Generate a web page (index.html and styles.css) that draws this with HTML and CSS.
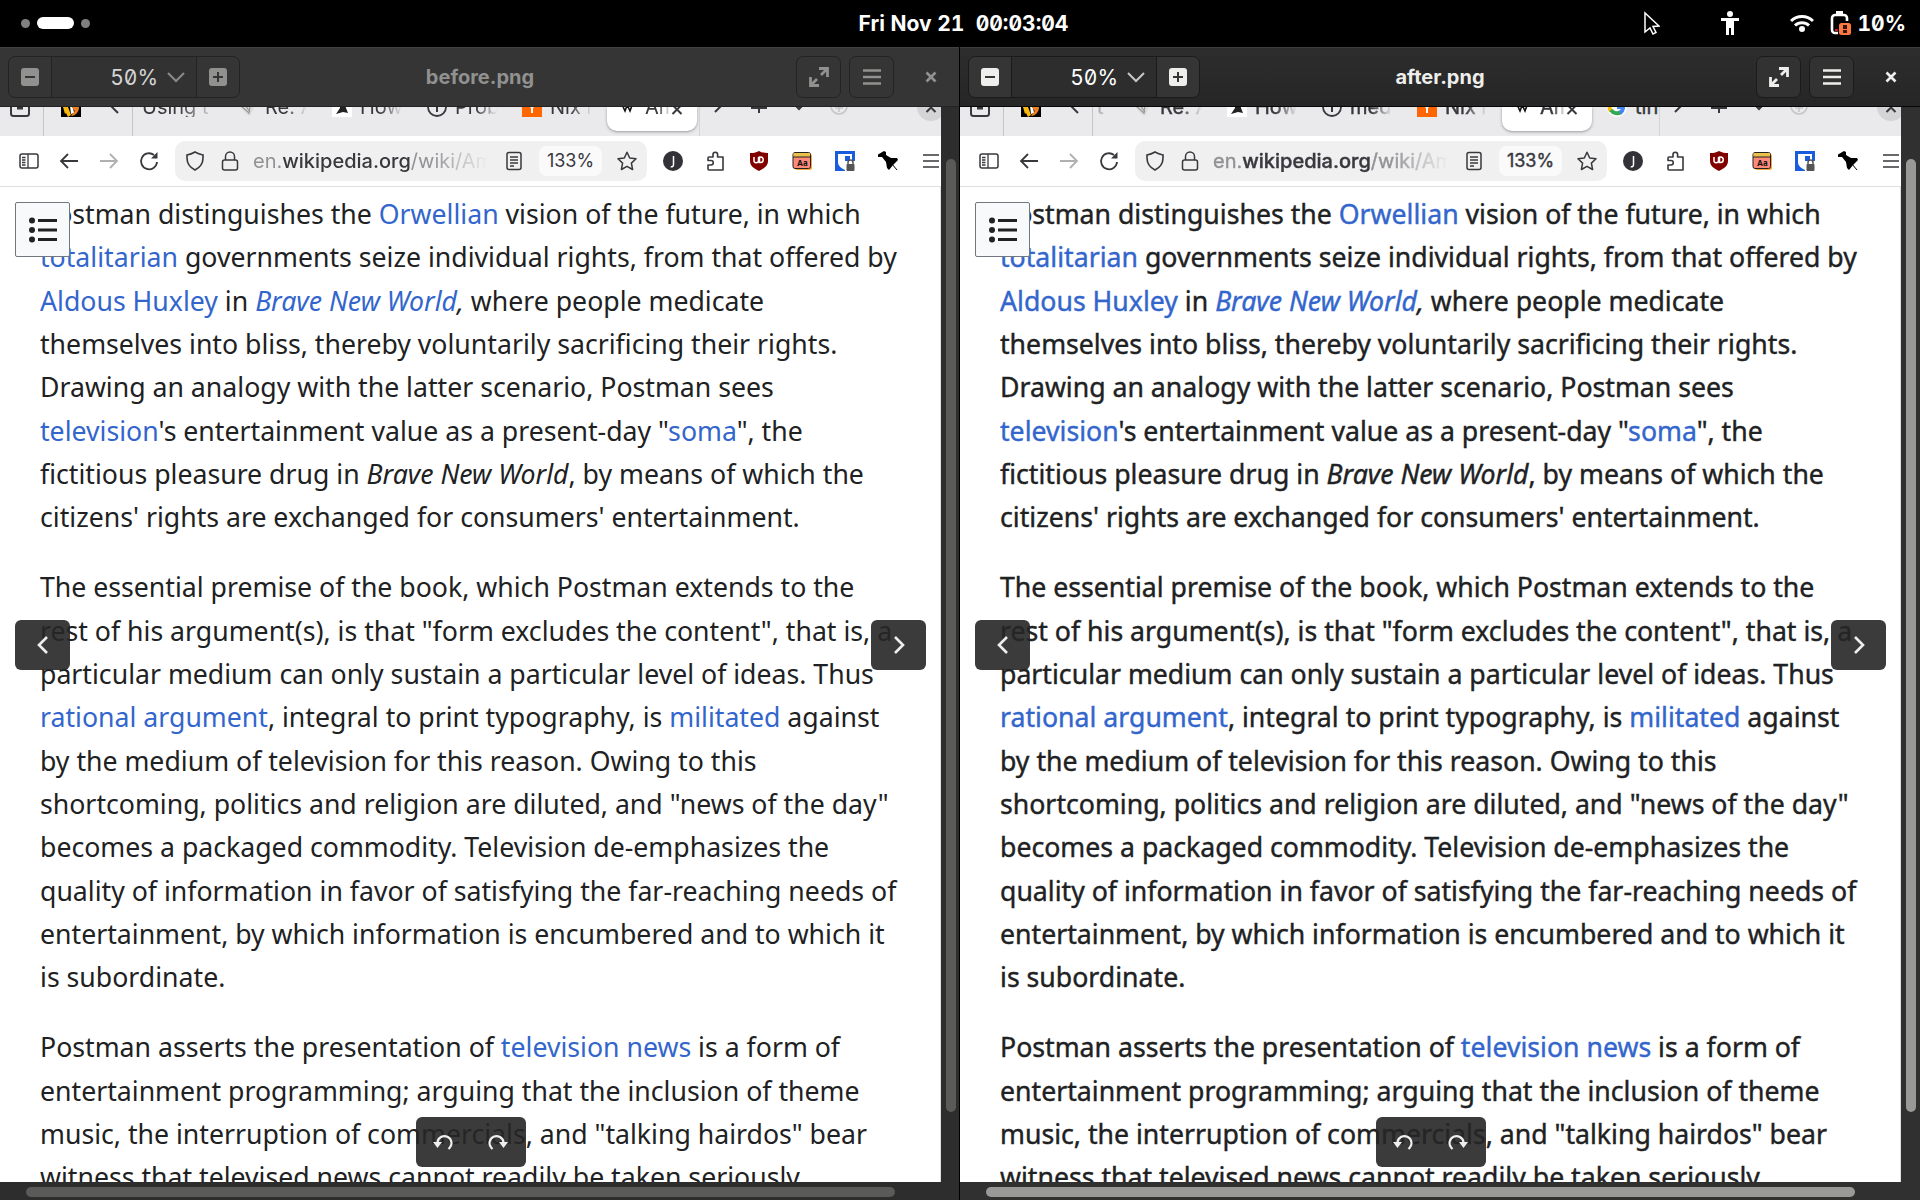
FILE: index.html
```html
<!DOCTYPE html>
<html lang="en">
<head>
<meta charset="utf-8">
<meta name="viewport" content="width=device-width, initial-scale=1">
<title>Image Viewer</title>
<link rel="stylesheet" href="styles.css">
</head>
<body>
<svg class="sprite" aria-hidden="true">
  <symbol id="zoom-out" viewBox="0 0 18 18"><path fill="currentColor" fill-rule="evenodd" d="M3 0h12a3 3 0 0 1 3 3v12a3 3 0 0 1-3 3H3a3 3 0 0 1-3-3V3a3 3 0 0 1 3-3zM4 8v2h10V8z"/></symbol>
  <symbol id="zoom-in" viewBox="0 0 18 18"><path fill="currentColor" fill-rule="evenodd" d="M3 0h12a3 3 0 0 1 3 3v12a3 3 0 0 1-3 3H3a3 3 0 0 1-3-3V3a3 3 0 0 1 3-3zM8 4v4H4v2h4v4h2v-4h4V8h-4V4z"/></symbol>
  <symbol id="chev-down" viewBox="0 0 18 18"><path d="M1 5l8 8 8-8" fill="none" stroke="currentColor" stroke-width="2"/></symbol>
  <symbol id="expand" viewBox="0 0 20 20"><path d="M10 1.500h8.500V10M18.500 1.500L12 8M10 18.500H1.500V10M1.500 18.500L8 12" fill="none" stroke="currentColor" stroke-width="2.800"/></symbol>
  <symbol id="menu" viewBox="0 0 18 18"><path d="M0 2.500h18M0 9h18M0 15.500h18" stroke="currentColor" stroke-width="2.400"/></symbol>
  <symbol id="close" viewBox="0 0 12 12"><path d="M1.500 1.500l9 9M10.500 1.500l-9 9" stroke="currentColor" stroke-width="2.600"/></symbol>
  <symbol id="box" viewBox="0 0 20 20"><rect x="1" y="1" width="18" height="18" rx="2.500" fill="none" stroke="currentColor" stroke-width="2"/><path d="M7 11h6" stroke="currentColor" stroke-width="3"/></symbol>
  <symbol id="hound" viewBox="0 0 20 20"><path fill="#000" d="M0 0h20v20H0z"/><path fill="#f7b90f" d="M2 10l5 0 3 8-3 2-2-4-1 1z"/><path fill="#fff" d="M9 9l3 1 1 6-3 1z"/><path fill="#f08020" d="M11 7l7 3c0 5-3 8-7 9l-1-1c4-2 5-5 1-7z"/></symbol>
  <symbol id="scroll-left" viewBox="0 0 20 20"><path d="M14 0L6 8l8 8" fill="none" stroke="currentColor" stroke-width="2"/></symbol>
  <symbol id="scroll-right" viewBox="0 0 20 20"><path d="M6 -1l8 8-8 8" fill="none" stroke="currentColor" stroke-width="2"/></symbol>
  <symbol id="shell" viewBox="0 0 20 20"><path fill="#ddd" d="M2 8l12-3 3 6-4 8-3-1z"/><path d="M4 9l8 7M8 8l5 7M13 8l-1 9" stroke="#999" stroke-width="1.200"/></symbol>
  <symbol id="arch" viewBox="0 0 20 20"><path fill="#fff" d="M0 0h20v20H0z"/><path fill="#222" d="M8 2h4l2 9 2 5-5-1-7 2 4-6z"/></symbol>
  <symbol id="info" viewBox="0 0 20 20"><circle cx="10" cy="10" r="9" fill="none" stroke="currentColor" stroke-width="1.800"/><path d="M10 6v9" stroke="currentColor" stroke-width="2"/></symbol>
  <symbol id="orange" viewBox="0 0 20 20"><path fill="#f60" d="M0 0h20v20H0z"/><path d="M5 4l5 7 5-7M10 11v5" fill="none" stroke="#fff" stroke-width="2"/></symbol>
  <symbol id="wiki" viewBox="0 0 20 20"><path d="M3 3l5 11 3-8M8 3l5 11 4-11" fill="none" stroke="#111" stroke-width="1.600"/></symbol>
  <symbol id="goog" viewBox="0 0 20 20"><circle cx="10" cy="10" r="10" fill="#fff"/><g fill="none" stroke-width="4"><path d="M4 6a7 7 0 0 1 11-1" stroke="#ea4335"/><path d="M4 6a7 7 0 0 0 0 8" stroke="#fbbc05"/><path d="M4 13a7 7 0 0 0 10 2" stroke="#34a853"/><path d="M10 10h6a7 7 0 0 1-3 6" stroke="#4285f4"/></g></symbol>
  <symbol id="plus" viewBox="0 0 20 20"><path d="M2 11h16M10 2v14" stroke="currentColor" stroke-width="2"/></symbol>
  <symbol id="plus-circle" viewBox="0 0 20 20"><circle cx="10" cy="9" r="8" fill="none" stroke="currentColor" stroke-width="1.600"/><path d="M6 11h8M10 7v8" stroke="currentColor" stroke-width="1.600"/></symbol>
  <symbol id="drop" viewBox="0 0 20 20"><path d="M4 6l6 6 6-6" fill="none" stroke="currentColor" stroke-width="2"/></symbol>
  <symbol id="tab-x" viewBox="0 0 12 12"><path d="M1.500 0l9 9M10.500 0l-9 9" stroke="currentColor" stroke-width="2"/></symbol>
  <symbol id="sidebar" viewBox="0 0 20 20"><rect x="1" y="3" width="18" height="14" rx="2" fill="none" stroke="currentColor" stroke-width="1.500"/><path d="M9 3v14M3 6.500h3.500M3 9h3.500M3 11.500h3.500M3 14h3.500" stroke="currentColor" stroke-width="1.300"/></symbol>
  <symbol id="back" viewBox="0 0 20 20"><path d="M19 10H2M9 3l-7 7 7 7" fill="none" stroke="currentColor" stroke-width="1.800"/></symbol>
  <symbol id="fwd" viewBox="0 0 20 20"><path d="M1 10h17M11 3l7 7-7 7" fill="none" stroke="currentColor" stroke-width="1.800"/></symbol>
  <symbol id="reload" viewBox="0 0 20 20"><path d="M18 11a8 8 0 1 1-3-7" fill="none" stroke="currentColor" stroke-width="1.800"/><path d="M18.500 1v6.500H12z" fill="currentColor"/></symbol>
  <symbol id="shield" viewBox="0 0 20 20"><path d="M10 1c3 1.800 5.500 2.500 8 3v3c0 6-3 9.500-8 12-5-2.500-8-6-8-12V4c3-.5 5-1.200 8-3z" fill="none" stroke="currentColor" stroke-width="1.600"/></symbol>
  <symbol id="lock" viewBox="0 0 20 20"><rect x="2.500" y="9" width="15" height="10" rx="2" fill="none" stroke="currentColor" stroke-width="1.500"/><path d="M5.500 9V5.500a4.500 4.500 0 0 1 9 0V9" fill="none" stroke="currentColor" stroke-width="1.500"/></symbol>
  <symbol id="reader" viewBox="0 0 20 20"><rect x="3" y="1.500" width="14" height="17" rx="2" fill="none" stroke="currentColor" stroke-width="1.500"/><path d="M6 6h8M6 9h8M6 12h8M6 15h4" stroke="currentColor" stroke-width="1.400"/></symbol>
  <symbol id="star" viewBox="0 0 20 20"><path d="M10 1.200l2.700 5.800 6.300.8-4.600 4.300 1.200 6.400L10 15.300l-5.600 3.200 1.200-6.400L1 7.800 7.300 7z" fill="none" stroke="currentColor" stroke-width="1.500" stroke-linejoin="round"/></symbol>
  <symbol id="jay" viewBox="0 0 20 20"><circle cx="10" cy="10" r="10" fill="#323238"/><path d="M10.500 5v8.500c0 1.600-1 2.500-2.800 2.200" fill="none" stroke="#fff" stroke-width="1.500"/></symbol>
  <symbol id="puzzle" viewBox="0 0 20 20"><path d="M3 6h4V3.500a2.300 2.300 0 0 1 4.600 0V6H17v13H3a1 1 0 0 1-1-1v-4h3a2 2 0 0 0 0-4.500H2V7a1 1 0 0 1 1-1z" fill="none" stroke="currentColor" stroke-width="1.600" stroke-linejoin="round"/></symbol>
  <symbol id="ublock" viewBox="0 0 20 20"><path fill="#800000" d="M10 0c3 1.800 6 2 9 2v8c0 5-4 7.500-9 10-5-2.500-9-5-9-10V2c3 0 6-.2 9-2z"/><path d="M5 6v3.500a2 2 0 0 0 4.500 0V6M10.500 6v5.500h1a2.700 2.700 0 0 0 0-5.500z" fill="none" stroke="#fff" stroke-width="1.500"/></symbol>
  <symbol id="fontbox" viewBox="0 0 20 20"><rect x="3" y="3" width="17" height="16" rx="2" fill="#f4a53c"/><rect x="1" y="1.500" width="17.500" height="16" rx="2" fill="#ff8a7a" stroke="#222"/><path fill="#e9c04a" d="M1.500 2h16.500v4H1.500z"/><path d="M1 6h17.500" stroke="#222"/><text x="5" y="15" font-family="Inter, sans-serif" font-size="8" font-weight="700" fill="#111">Aa</text></symbol>
  <symbol id="vault" viewBox="0 0 20 20"><path fill="#175ddc" d="M0 0h20v20H0z"/><path fill="#fff" d="M3 3h14v8c0 4-3 6-7 8-4-2-7-4-7-8z"/><path fill="#175ddc" d="M10 5h5v6c0 2-2 3-5 5z"/><path fill="#fff" d="M10 10h10v10H10z"/><rect x="11.500" y="13" width="8" height="7" rx="1" fill="#555"/><path d="M13 13v-1.500a2.500 2.500 0 0 1 5 0V13" fill="none" stroke="#555" stroke-width="1.500"/></symbol>
  <symbol id="pin" viewBox="0 0 20 20"><path fill="#000" d="M6 0l2 1v3l5 3 6 0 1 2-5 5-4 5-2-2-1-6-4-5-4 0-1-2z"/><path d="M14 13l5 6" stroke="#000" stroke-width="1"/></symbol>
  <symbol id="burger" viewBox="0 0 20 20"><path d="M2 4h16M2 10h16M2 16h16" stroke="currentColor" stroke-width="1.600"/></symbol>
  <symbol id="toc" viewBox="0 0 28 26"><g fill="currentColor"><circle cx="3" cy="3.500" r="3"/><circle cx="3" cy="13" r="3"/><circle cx="3" cy="22.500" r="3"/><path d="M9 2h19v3H9zM9 11.500h19v3H9zM9 21h19v3H9z"/></g></symbol>
  <symbol id="prev" viewBox="0 0 12 18"><path d="M10 1L2 9l8 8" fill="none" stroke="currentColor" stroke-width="2.600"/></symbol>
  <symbol id="next" viewBox="0 0 12 18"><path d="M2 1l8 8-8 8" fill="none" stroke="currentColor" stroke-width="2.600"/></symbol>
  <symbol id="rot-left" viewBox="0 0 20 18"><path d="M4.500 12V9.500a7 7 0 1 1 12 5.500l-1 1" fill="none" stroke="currentColor" stroke-width="2.200"/><path fill="currentColor" d="M0 9h9l-4.500 6z"/></symbol>
  <symbol id="rot-right" viewBox="0 0 20 18"><path d="M15.500 12V9.500a7 7 0 1 0-12 5.500l1 1" fill="none" stroke="currentColor" stroke-width="2.200"/><path fill="currentColor" d="M20 9h-9l4.500 6z"/></symbol>
</svg>

<header class="panel">
  <div class="workspaces"><span class="dot"></span><span class="dot current"></span><span class="dot"></span></div>
  <time class="clock">Fri Nov 21&nbsp; 00:03:04</time>
  <div class="status">
    <svg class="pointer" viewBox="0 0 16 24"><path d="M1 2v19l5-4 3 6 3-1.500-3-6 6-.5z" fill="#000" stroke="#fff" stroke-width="1.500"/></svg>
    <svg class="person" viewBox="0 0 18 24"><path fill="#fff" d="M9 0a3 3 0 1 1 0 6 3 3 0 0 1 0-6zM0 7h18v3h-5v14h-3v-7H8v7H5V10H0z"/></svg>
    <svg class="wifi" viewBox="0 0 24 20"><path d="M1 8a15.500 15.500 0 0 1 22 0M5 12.500a10 10 0 0 1 14 0" fill="none" stroke="#fff" stroke-width="3"/><circle cx="12" cy="16" r="3" fill="#fff"/></svg>
    <span class="battery"><svg viewBox="0 0 22 24"><path d="M8 22H5a3 3 0 0 1-3-3V7a3 3 0 0 1 3-3h9a3 3 0 0 1 3 3v3" fill="none" stroke="#fff" stroke-width="2.600"/><path fill="#fff" d="M6 0h7v4H6z"/><path fill="#c01c28" d="M5 18h3v2H5z"/><rect x="9" y="12" width="12" height="12" rx="2.500" fill="#ff7840"/><path fill="#33150a" d="M13 14h4v4h-4zM13 19h4v3h-4z"/></svg>10%</span>
  </div>
</header>

<main class="desktop">
  <section class="window inactive" aria-label="before.png">
    <header class="titlebar">
      <div class="zoom">
        <button aria-label="Zoom out"><svg class="i18"><use href="#zoom-out"/></svg></button>
        <label class="level"><select aria-label="Zoom level"><option>50%</option></select><svg class="i18"><use href="#chev-down"/></svg></label>
        <button aria-label="Zoom in"><svg class="i18"><use href="#zoom-in"/></svg></button>
      </div>
      <h1 class="title">before.png</h1>
      <div class="controls">
        <button class="tool" aria-label="Fullscreen"><svg class="i20"><use href="#expand"/></svg></button>
        <button class="tool" aria-label="Menu"><svg class="i18"><use href="#menu"/></svg></button>
        <button class="close" aria-label="Close"><svg class="i12"><use href="#close"/></svg></button>
      </div>
    </header>
    <div class="viewer">
      <div class="image">
        <div class="tabstrip">
          <div class="pinned first"><svg class="i20"><use href="#box"/></svg></div>
          <div class="pinned second"><svg class="i20"><use href="#hound"/></svg><svg class="i20"><use href="#scroll-left"/></svg></div>
          <div class="tabs">
            <div class="tab wide"><span>Using t</span></div>
            <div class="tab"><svg class="i20"><use href="#shell"/></svg><span>Re: A</span></div>
            <div class="tab"><svg class="i20"><use href="#arch"/></svg><span>How</span></div>
            <div class="tab"><svg class="i20"><use href="#info"/></svg><span>Prob</span></div>
            <div class="tab"><svg class="i20"><use href="#orange"/></svg><span>Nix i</span></div>
            <div class="tab active"><svg class="i20"><use href="#wiki"/></svg><span>Am</span><svg class="i12"><use href="#tab-x"/></svg></div>
          </div>
          <div class="tabtools">
            <svg class="i20"><use href="#scroll-right"/></svg>
            <svg class="i20"><use href="#plus"/></svg>
            <svg class="i20"><use href="#drop"/></svg>
            <svg class="i20 faint"><use href="#plus-circle"/></svg>
            <span class="closer"><svg class="i12"><use href="#tab-x"/></svg></span>
          </div>
        </div>
        <div class="toolbar">
          <div class="nav">
            <svg class="i20"><use href="#sidebar"/></svg><svg class="i20"><use href="#back"/></svg><svg class="i20 dim"><use href="#fwd"/></svg><svg class="i20"><use href="#reload"/></svg>
          </div>
          <div class="urlbar">
            <svg class="i20"><use href="#shield"/></svg><svg class="i20"><use href="#lock"/></svg>
            <div class="url" role="textbox" aria-label="Address">en.<b>wikipedia.org</b>/wiki/Am</div>
            <svg class="i20"><use href="#reader"/></svg><span class="pill">133%</span><svg class="i20"><use href="#star"/></svg>
          </div>
          <div class="addons">
            <svg class="i20"><use href="#jay"/></svg><svg class="i20"><use href="#puzzle"/></svg><svg class="i20"><use href="#ublock"/></svg><svg class="i20"><use href="#fontbox"/></svg><svg class="i20"><use href="#vault"/></svg><svg class="i20"><use href="#pin"/></svg><svg class="i20"><use href="#burger"/></svg>
          </div>
        </div>
        <article class="page">
          <p>Postman distinguishes the <a href="#">Orwellian</a> vision of the future, in which <a href="#">totalitarian</a> governments seize individual rights, from that offered by <a href="#">Aldous Huxley</a> in <i><a href="#">Brave New World</a>,</i> where people medicate themselves into bliss, thereby voluntarily sacrificing their rights. Drawing an analogy with the latter scenario, Postman sees <a href="#">television</a>'s entertainment value as a present-day "<a href="#">soma</a>", the fictitious pleasure drug in <i>Brave New World</i>, by means of which the citizens' rights are exchanged for consumers' entertainment.</p>
          <p>The essential premise of the book, which Postman extends to the rest of his argument(s), is that "form excludes the content", that is, a particular medium can only sustain a particular level of ideas. Thus <a href="#">rational argument</a>, integral to print typography, is <a href="#">militated</a> against by the medium of television for this reason. Owing to this shortcoming, politics and religion are diluted, and "news of the day" becomes a packaged commodity. Television de-emphasizes the quality of information in favor of satisfying the far-reaching needs of entertainment, by which information is encumbered and to which it is subordinate.</p>
          <p>Postman asserts the presentation of <a href="#">television news</a> is a form of entertainment programming; arguing that the inclusion of theme music, the interruption of commercials, and "talking hairdos" bear witness that televised news cannot readily be taken seriously.</p>
          <button class="toc" aria-label="Contents"><svg><use href="#toc"/></svg></button>
        </article>
      </div>
      <button class="osd prev" aria-label="Previous"><svg><use href="#prev"/></svg></button>
      <button class="osd next" aria-label="Next"><svg><use href="#next"/></svg></button>
      <div class="osd rotate"><button aria-label="Rotate left"><svg><use href="#rot-left"/></svg></button><button aria-label="Rotate right"><svg><use href="#rot-right"/></svg></button></div>
    </div>
    <div class="vbar"><span></span></div>
    <div class="hbar"><span></span></div>
  </section>

  <section class="window focused" aria-label="after.png">
    <header class="titlebar">
      <div class="zoom">
        <button aria-label="Zoom out"><svg class="i18"><use href="#zoom-out"/></svg></button>
        <label class="level"><select aria-label="Zoom level"><option>50%</option></select><svg class="i18"><use href="#chev-down"/></svg></label>
        <button aria-label="Zoom in"><svg class="i18"><use href="#zoom-in"/></svg></button>
      </div>
      <h1 class="title">after.png</h1>
      <div class="controls">
        <button class="tool" aria-label="Fullscreen"><svg class="i20"><use href="#expand"/></svg></button>
        <button class="tool" aria-label="Menu"><svg class="i18"><use href="#menu"/></svg></button>
        <button class="close" aria-label="Close"><svg class="i12"><use href="#close"/></svg></button>
      </div>
    </header>
    <div class="viewer">
      <div class="image">
        <div class="tabstrip">
          <div class="pinned first"><svg class="i20"><use href="#box"/></svg></div>
          <div class="pinned second"><svg class="i20"><use href="#hound"/></svg><svg class="i20"><use href="#scroll-left"/></svg></div>
          <div class="tabs scrolled">
            <div class="tab wide"><span>Using t</span></div>
            <div class="tab"><svg class="i20"><use href="#shell"/></svg><span>Re: A</span></div>
            <div class="tab"><svg class="i20"><use href="#arch"/></svg><span>How</span></div>
            <div class="tab"><svg class="i20"><use href="#info"/></svg><span>med</span></div>
            <div class="tab"><svg class="i20"><use href="#orange"/></svg><span>Nix i</span></div>
            <div class="tab active"><svg class="i20"><use href="#wiki"/></svg><span>Am</span><svg class="i12"><use href="#tab-x"/></svg></div>
            <div class="tab last"><svg class="i20"><use href="#goog"/></svg><span>tin</span></div>
          </div>
          <div class="tabtools">
            <svg class="i20"><use href="#scroll-right"/></svg>
            <svg class="i20"><use href="#plus"/></svg>
            <svg class="i20"><use href="#drop"/></svg>
            <svg class="i20 faint"><use href="#plus-circle"/></svg>
            <span class="closer"><svg class="i12"><use href="#tab-x"/></svg></span>
          </div>
        </div>
        <div class="toolbar">
          <div class="nav">
            <svg class="i20"><use href="#sidebar"/></svg><svg class="i20"><use href="#back"/></svg><svg class="i20 dim"><use href="#fwd"/></svg><svg class="i20"><use href="#reload"/></svg>
          </div>
          <div class="urlbar">
            <svg class="i20"><use href="#shield"/></svg><svg class="i20"><use href="#lock"/></svg>
            <div class="url" role="textbox" aria-label="Address">en.<b>wikipedia.org</b>/wiki/Am</div>
            <svg class="i20"><use href="#reader"/></svg><span class="pill">133%</span><svg class="i20"><use href="#star"/></svg>
          </div>
          <div class="addons">
            <svg class="i20"><use href="#jay"/></svg><svg class="i20"><use href="#puzzle"/></svg><svg class="i20"><use href="#ublock"/></svg><svg class="i20"><use href="#fontbox"/></svg><svg class="i20"><use href="#vault"/></svg><svg class="i20"><use href="#pin"/></svg><svg class="i20"><use href="#burger"/></svg>
          </div>
        </div>
        <article class="page">
          <p>Postman distinguishes the <a href="#">Orwellian</a> vision of the future, in which <a href="#">totalitarian</a> governments seize individual rights, from that offered by <a href="#">Aldous Huxley</a> in <i><a href="#">Brave New World</a>,</i> where people medicate themselves into bliss, thereby voluntarily sacrificing their rights. Drawing an analogy with the latter scenario, Postman sees <a href="#">television</a>'s entertainment value as a present-day "<a href="#">soma</a>", the fictitious pleasure drug in <i>Brave New World</i>, by means of which the citizens' rights are exchanged for consumers' entertainment.</p>
          <p>The essential premise of the book, which Postman extends to the rest of his argument(s), is that "form excludes the content", that is, a particular medium can only sustain a particular level of ideas. Thus <a href="#">rational argument</a>, integral to print typography, is <a href="#">militated</a> against by the medium of television for this reason. Owing to this shortcoming, politics and religion are diluted, and "news of the day" becomes a packaged commodity. Television de-emphasizes the quality of information in favor of satisfying the far-reaching needs of entertainment, by which information is encumbered and to which it is subordinate.</p>
          <p>Postman asserts the presentation of <a href="#">television news</a> is a form of entertainment programming; arguing that the inclusion of theme music, the interruption of commercials, and "talking hairdos" bear witness that televised news cannot readily be taken seriously.</p>
          <button class="toc" aria-label="Contents"><svg><use href="#toc"/></svg></button>
        </article>
      </div>
      <button class="osd prev" aria-label="Previous"><svg><use href="#prev"/></svg></button>
      <button class="osd next" aria-label="Next"><svg><use href="#next"/></svg></button>
      <div class="osd rotate"><button aria-label="Rotate left"><svg><use href="#rot-left"/></svg></button><button aria-label="Rotate right"><svg><use href="#rot-right"/></svg></button></div>
    </div>
    <div class="vbar"><span></span></div>
    <div class="hbar"><span></span></div>
  </section>
</main>
</body>
</html>
```
FILE: styles.css
```css
* { box-sizing: border-box; }

body {
  margin: 0;
  height: 100vh;
  display: flex;
  flex-direction: column;
  overflow: hidden;
  background: #000;
  font-family: Inter, "Liberation Sans", sans-serif;
  font-size: 20px;
  font-feature-settings: "zero" 1;
}

.sprite { display: none; }
svg { flex: none; display: block; }
.i20 { width: 20px; height: 20px; }
.i18 { width: 18px; height: 18px; }
.i12 { width: 12px; height: 12px; }

button {
  display: flex;
  align-items: center;
  justify-content: center;
  padding: 0;
  border: 0;
  background: none;
  color: inherit;
  font: inherit;
}

/* Top panel */
.panel {
  flex: none;
  height: 47px;
  display: grid;
  grid-template-columns: 1fr auto 1fr;
  align-items: center;
  padding: 0 14px 1px 21px;
  color: #fff;
  font-size: 21px;
  font-weight: 700;
  font-feature-settings: "zero" 1, "tnum" 1;
}
.workspaces { display: flex; align-items: center; gap: 7px; }
.dot { width: 9px; height: 9px; border-radius: 5px; background: #808080; }
.dot.current { width: 37px; height: 12px; border-radius: 6px; background: #fff; }
.status { display: flex; align-items: center; justify-content: flex-end; }
.pointer { width: 16px; height: 24px; margin-right: 61px; }
.person { width: 18px; height: 24px; margin-right: 51px; }
.wifi { width: 24px; height: 20px; margin-right: 16px; }
.battery { display: flex; align-items: center; gap: 6px; }
.battery svg { width: 22px; height: 24px; }

/* Windows */
.desktop {
  flex: 1;
  min-height: 0;
  display: grid;
  grid-template-columns: 1fr 1fr;
}
.window {
  display: grid;
  grid-template-columns: minmax(0, 1fr) 19px;
  grid-template-rows: 60px minmax(0, 1fr) 18px;
  min-width: 0;
  min-height: 0;
  background: #303030;
}
.inactive {
  grid-template-columns: minmax(0, 1fr) 18px;
  border-right: 1px solid #000;
  background: #2d2d2d;
}

.titlebar {
  grid-column: 1 / -1;
  display: grid;
  grid-template-columns: 1fr auto 1fr;
  align-items: center;
  padding: 0 19px 0 8px;
  border-top: 1px solid #3c3c3c;
  border-bottom: 1px solid #070707;
  background: linear-gradient(#2d2d2d, #262626);
  color: #eeeeec;
}
.inactive .titlebar {
  padding-right: 18px;
  border-color: #404040 transparent #232323;
  background: #353535;
  color: #919190;
}
.title { margin: 0 0 0 11px; font-size: 20px; line-height: 26px; font-weight: 700; }
.zoom {
  display: flex;
  justify-self: start;
  height: 42px;
  border: 1px solid #1b1b1b;
  border-radius: 7px;
  background: #353535;
}
.zoom button { width: 42px; }
.level {
  display: flex;
  align-items: center;
  width: 146px;
  padding-right: 11px;
  gap: 9px;
  border: solid #1b1b1b;
  border-width: 0 1px;
  background: #2d2d2d;
  color: #c8c8c6;
}
.inactive .zoom { border-color: #232323; }
.inactive .level { border-color: #232323; background: #323232; color: #8a8a89; }
.level select {
  flex: 1;
  min-width: 0;
  padding: 0;
  border: 0;
  appearance: none;
  background: none;
  color: #fff;
  font: inherit;
  font-size: 21px;
  font-feature-settings: "zero" 1, "tnum" 1;
  text-align-last: right;
}
.inactive .level select { color: #d6d6d5; }
.controls { display: flex; align-items: center; justify-content: flex-end; gap: 8px; }
.tool {
  width: 45px;
  height: 42px;
  border: 1px solid #1b1b1b;
  border-radius: 7px;
  background: #323232;
}
.inactive .tool { border-color: #232323; background: #353535; }
.close { width: 20px; height: 42px; margin-left: 19px; }

.viewer { position: relative; min-width: 0; overflow: hidden; }
.image {
  height: 100%;
  display: flex;
  flex-direction: column;
  overflow: hidden;
  background: #fff;
  color: #38383d;
}

/* Browser tabs, cut by the top of the view */
.tabstrip {
  flex: none;
  height: 29px;
  display: flex;
  overflow: hidden;
  background: #eaeaec;
}
.pinned, .tab, .tabtools { display: flex; align-items: flex-end; padding-bottom: 19px; }
.pinned { border-right: 1px solid #c4c4c7; }
.first { width: 44px; padding-left: 10px; }
.second { width: 89px; padding-left: 17px; gap: 23px; }
.tabs { flex: 1; min-width: 0; display: flex; gap: 5px; overflow: hidden; }
.tab {
  flex: none;
  width: 90px;
  padding-left: 10px;
  gap: 8px;
}
.tab:first-child { margin-left: -1px; }
.scrolled .tab:first-child { margin-left: -66px; }
.tab span {
  width: 42px;
  overflow: hidden;
  line-height: 20px;
  white-space: nowrap;
  mask-image: linear-gradient(to right, #000 50%, transparent);
}
.tab.wide span { width: 74px; }
.tab.last span { mask-image: none; }
.active {
  height: 24px;
  padding-bottom: 14px;
  border-radius: 0 0 10px 10px;
  background: #fff;
  box-shadow: 0 1px 3px #999;
}
.tab.active span { width: 26px; }
.active .i12 { margin-left: -8px; }
.tabtools {
  width: 242px;
  padding-left: 9px;
  gap: 20px;
  border-left: 1px solid #d4d4d6;
}
.faint { color: #c6c6c8; }
.closer {
  display: flex;
  justify-content: center;
  align-items: flex-end;
  width: 28px;
  height: 28px;
  margin: 0 -4px -4px auto;
  padding-bottom: 6px;
  border-radius: 14px;
  background: #d4d4d6;
}

/* Browser toolbar */
.toolbar {
  flex: none;
  height: 51px;
  display: flex;
  align-items: center;
  border-bottom: 1px solid #dedee0;
}
.nav { display: flex; gap: 20px; padding: 0 16px 0 19px; }
.dim { color: #b0b0b2; }
.urlbar {
  flex: 1;
  min-width: 0;
  height: 40px;
  display: flex;
  align-items: center;
  gap: 15px;
  padding: 0 10px;
  border-radius: 10px;
  background: #f0f0f1;
}
.url {
  flex: 1;
  min-width: 0;
  margin-left: -2px;
  overflow: hidden;
  white-space: nowrap;
  color: #929295;
  mask-image: linear-gradient(to right, #000 75%, transparent);
}
.url b { color: #38383d; font-weight: 500; }
.pill {
  width: 63px;
  border-radius: 8px;
  background: #fafafa;
  line-height: 30px;
  font-size: 18px;
  text-align: center;
}
.addons { display: flex; gap: 23px; padding-left: 16px; }

/* Article */
.page {
  position: relative;
  flex: 1;
  min-height: 0;
  padding: 6px 43px 0 40px;
  overflow: hidden;
  border-right: 1px solid #dedee0;
  color: #202122;
  font: 20pt/1.625 "Noto Sans", sans-serif;
}
.page p { margin: 0 0 1em; }
.page a { color: #3366cc; text-decoration: none; }
.focused .image { -webkit-text-stroke: 0.02em; }
.toc {
  position: absolute;
  top: 15px;
  left: 15px;
  width: 55px;
  height: 55px;
  border: 1px solid #72777d;
  border-radius: 2px;
  background: #f8f9fa;
  color: #202122;
}
.toc svg { width: 28px; height: 26px; }

/* Controls over the image */
.osd {
  position: absolute;
  height: 50px;
  border-radius: 6px;
  background: rgba(38, 38, 38, 0.9);
  color: #eeeeec;
}
.prev, .next { top: calc(50% - 25px); width: 55px; }
.prev { left: 15px; }
.next { right: 15px; }
.prev svg, .next svg { width: 12px; height: 18px; }
.rotate {
  bottom: 15px;
  left: calc(50% - 55px);
  display: flex;
  width: 110px;
}
.rotate button { flex: 1; }
.rotate svg { width: 20px; height: 18px; }

/* Scroll bars */
.vbar, .hbar { display: flex; }
.vbar { padding: 52px 4px 70px 5px; }
.inactive .vbar { padding-right: 3px; }
.hbar { padding: 5px 46px 3px 26px; }
.vbar span, .hbar span { flex: 1; border-radius: 5px; background: #999997; }
.inactive .vbar span, .inactive .hbar span { background: #5a5a58; }
```
